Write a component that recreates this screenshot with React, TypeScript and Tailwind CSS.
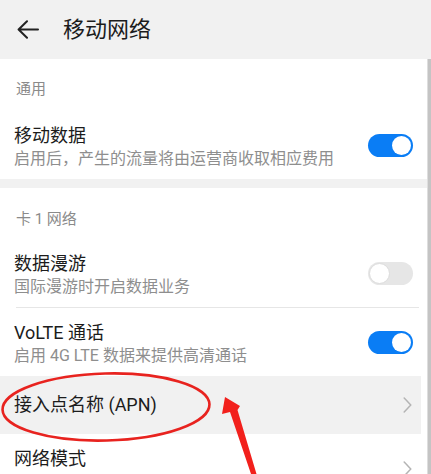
import React from "react";

const FONT = { fontFamily: '"Roboto", "Noto Sans CJK SC", "Noto Sans", sans-serif' };

function Toggle({ on }: { on: boolean }) {
  return on ? (
    <div className="w-[45px] h-[23px] rounded-full bg-[#0a7df5] flex items-center justify-end pr-[2px] shrink-0">
      <div className="w-[19px] h-[19px] rounded-full bg-white" />
    </div>
  ) : (
    <div className="w-[45px] h-[23px] rounded-full bg-[#e6e6e6] flex items-center justify-start pl-[1px] shrink-0">
      <div className="w-[21px] h-[21px] rounded-full bg-white border border-[#dcdcdc]" />
    </div>
  );
}

function Chevron() {
  return (
    <svg width="9" height="16" viewBox="0 0 9 16" className="shrink-0">
      <path d="M1.2 1 L7.8 8 L1.2 15" fill="none" stroke="#b4b4b4" strokeWidth="1.5" strokeLinecap="round" strokeLinejoin="round" />
    </svg>
  );
}

function Row({ title, sub, right, divider }: { title: string; sub?: string; right: React.ReactNode; divider?: boolean }) {
  return (
    <div className="flex flex-col">
      <div className="h-[68px] flex items-center pl-[14px] pr-[14px]">
        <div className="flex-1 flex flex-col pt-[6px]">
          <div className="text-[18px] leading-[22px] text-[#1c1c1c]">{title}</div>
          {sub && <div className="text-[16px] leading-[24px] text-[#8e8e8e]">{sub}</div>}
        </div>
        {right}
      </div>
      {divider && <div className="ml-[16px] mr-[8px] h-px bg-[#e6e6e6]" />}
    </div>
  );
}

export default function App() {
  return (
    <div className="w-[431px] h-[474px] overflow-hidden relative bg-white" style={FONT}>
      <div className="h-[59px] bg-[#f1f1f1] flex items-center pl-[17px]">
        <svg width="22" height="19" viewBox="0 0 22 19" className="shrink-0">
          <path d="M21 9.5 H1.8 M10 1.2 L1.6 9.5 L10 17.8" fill="none" stroke="#222" strokeWidth="2" strokeLinecap="round" strokeLinejoin="round" />
        </svg>
        <div className="ml-[24px] text-[22px] leading-[30px] text-[#1c1c1c]">移动网络</div>
      </div>
      <div className="flex">
        <div className="w-[427px] flex flex-col">
          <div className="pt-[20px] pb-[12px] pl-[16px] text-[15px] leading-[20px] text-[#8a8a8a]">通用</div>
          <Row title="移动数据" sub="启用后，产生的流量将由运营商收取相应费用" right={<Toggle on />} />
          <div className="h-[9px] bg-[#f1f1f1]" />
          <div className="pt-[21px] pb-[10px] pl-[16px] text-[15px] leading-[20px] text-[#8a8a8a]">卡 1 网络</div>
          <Row title="数据漫游" sub="国际漫游时开启数据业务" right={<Toggle on={false} />} divider />
          <Row title="VoLTE 通话" sub="启用 4G LTE 数据来提供高清通话" right={<Toggle on />} />
          <div className="h-[58px] mr-[6px] bg-[#f1f1f1] flex items-center pl-[14px] pr-[9px]">
            <div className="flex-1 text-[18px] leading-[22px] text-[#1c1c1c]">接入点名称 (APN)</div>
            <Chevron />
          </div>
          <div className="h-[69px] flex items-start pl-[14px] pr-[15px]">
            <div className="flex-1 pt-[14px] text-[18px] leading-[22px] text-[#1c1c1c]">网络模式</div>
            <div className="pt-[27px]">
              <Chevron />
            </div>
          </div>
        </div>
        <div className="w-[4px] self-stretch bg-[#c4c4c4] border-l border-[#dedede]" />
      </div>
      <svg className="absolute inset-0 pointer-events-none" width="431" height="474" viewBox="0 0 431 474">
        <ellipse cx="106" cy="407" rx="103.5" ry="33.5" fill="none" stroke="#e8231f" strokeWidth="2.6" transform="rotate(-1.5 106 407)" />
        <polygon points="225,397 240,406 237.5,410 256.5,474 251,474 230,412 222,414" fill="#f2201c" />
      </svg>
    </div>
  );
}
